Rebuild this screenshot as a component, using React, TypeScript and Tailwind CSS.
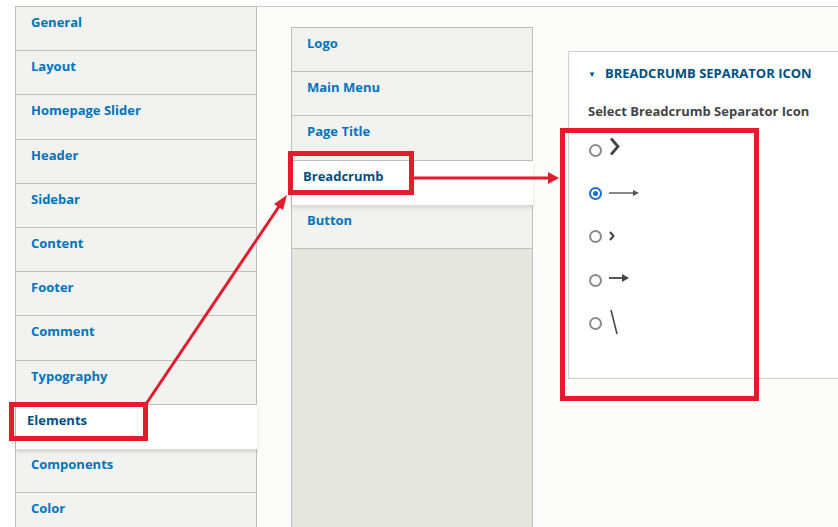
import React from "react";

const leftTabs = [
  "General",
  "Layout",
  "Homepage Slider",
  "Header",
  "Sidebar",
  "Content",
  "Footer",
  "Comment",
  "Typography",
  "Elements",
  "Components",
  "Color",
];

const midTabs = ["Logo", "Main Menu", "Page Title", "Breadcrumb", "Button"];

function Tab({ label, active }: { label: string; active: boolean }) {
  if (active) {
    return (
      <div className="relative z-10 -mr-px h-[44.2px] shrink-0 bg-white pl-[11px] pt-[6px] text-[13px] font-bold text-[#004f80] shadow-[0_3px_4px_rgba(0,0,0,0.12)]">
        {label}
      </div>
    );
  }
  return (
    <div className="h-[44.2px] shrink-0 border-b border-[#c0c0bb] bg-[#f2f2f0] pl-[15px] pt-[6px] text-[13px] font-bold text-[#0074bd]">
      {label}
    </div>
  );
}

function Radio({ checked }: { checked?: boolean }) {
  return checked ? (
    <span className="flex h-[13px] w-[13px] items-center justify-center rounded-full border-2 border-[#1a6fd0] bg-white">
      <span className="block h-[5px] w-[5px] rounded-full bg-[#1a6fd0]" />
    </span>
  ) : (
    <span className="block h-[13px] w-[13px] rounded-full border-2 border-[#8a8a8a] bg-white" />
  );
}

function Option({ checked, children }: { checked?: boolean; children: React.ReactNode }) {
  return (
    <div className="flex h-[43.2px] items-center gap-[6px]">
      <Radio checked={checked} />
      <span className="flex h-[28px] w-[40px] items-center">{children}</span>
    </div>
  );
}

export default function App() {
  return (
    <div
      className="relative h-[527px] w-[838px] overflow-hidden bg-white"
      style={{ fontFamily: '"Open Sans", "Liberation Sans", sans-serif' }}
    >
      <div className="flex h-full pl-[15px] pt-[6px]">
        {/* left vertical tabs */}
        <div className="flex w-[242px] shrink-0 flex-col border-l border-t border-r border-[#c0c0bb] bg-[#f2f2f0]">
          {leftTabs.map((t) => (
            <Tab key={t} label={t} active={t === "Elements"} />
          ))}
        </div>
        {/* content area */}
        <div className="flex flex-1 border-t border-[#c8c8c4] bg-[#fcfcfa] pl-[34px] pt-[20px]">
          <div className="flex w-[242px] shrink-0 flex-col border-l border-t border-r border-[#bdbdb8] bg-[#e6e6e1]">
            {midTabs.map((t) => (
              <Tab key={t} label={t} active={t === "Breadcrumb"} />
            ))}
          </div>
          <div className="ml-[35px] mt-[24px] h-[328px] flex-1 rounded-tl-[2px] border-b border-l border-t border-[#cfcfcf] bg-white">
            <div className="flex items-center pl-[19px] pt-[12px] text-[13px] font-bold text-[#004f80]">
              <span className="mr-[9px] text-[8px]">▼</span>
              <span>BREADCRUMB SEPARATOR ICON</span>
            </div>
            <div className="pl-[19px] pt-[18px] text-[13px] font-bold text-[#444]">
              Select Breadcrumb Separator Icon
            </div>
            <div className="flex flex-col pl-[20px] pt-[8px]">
              <Option>
                <svg width="14" height="20" viewBox="0 0 14 20" className="-mt-[7px]">
                  <path d="M3 1.5 L10 9.5 L3 17.5" fill="none" stroke="#444" strokeWidth="2.8" strokeLinejoin="miter" />
                </svg>
              </Option>
              <Option checked>
                <svg width="32" height="10" viewBox="0 0 32 10" className="-mt-[2px]">
                  <line x1="1" y1="5" x2="27" y2="5" stroke="#555" strokeWidth="1.4" />
                  <polygon points="31,5 25,2 25,8" fill="#555" />
                </svg>
              </Option>
              <Option>
                <svg width="8" height="12" viewBox="0 0 8 12" className="-mt-[2px]">
                  <path d="M2 2 L5.5 6 L2 10" fill="none" stroke="#444" strokeWidth="2" />
                </svg>
              </Option>
              <Option>
                <svg width="24" height="12" viewBox="0 0 24 12" className="-mt-[4px]">
                  <line x1="1" y1="6" x2="16" y2="6" stroke="#444" strokeWidth="1.8" />
                  <polygon points="21,6 14,2 14,10" fill="#444" />
                </svg>
              </Option>
              <Option>
                <svg width="12" height="28" viewBox="0 0 12 28" className="-mt-[2px]">
                  <line x1="3" y1="2" x2="9" y2="26" stroke="#444" strokeWidth="1.6" />
                </svg>
              </Option>
            </div>
          </div>
        </div>
      </div>

      {/* annotations */}
      <div className="absolute left-[9px] top-[402px] z-20 h-[39px] w-[139px] border-[5px] border-[#e31b2b]" />
      <div className="absolute left-[288px] top-[151px] z-20 h-[44px] w-[126px] border-[5px] border-[#e31b2b]" />
      <div className="absolute left-[560px] top-[128px] z-20 h-[273px] w-[199px] border-[5px] border-[#e31b2b]" />
      <svg className="absolute left-0 top-0 z-20" width="838" height="527">
        <line x1="146" y1="404" x2="280" y2="205" stroke="#e31b2b" strokeWidth="3" />
        <polygon points="287,195 274,204 283,210" fill="#e31b2b" />
        <line x1="413" y1="178" x2="550" y2="178" stroke="#e31b2b" strokeWidth="3" />
        <polygon points="559,178 548,172 548,184" fill="#e31b2b" />
      </svg>
    </div>
  );
}
